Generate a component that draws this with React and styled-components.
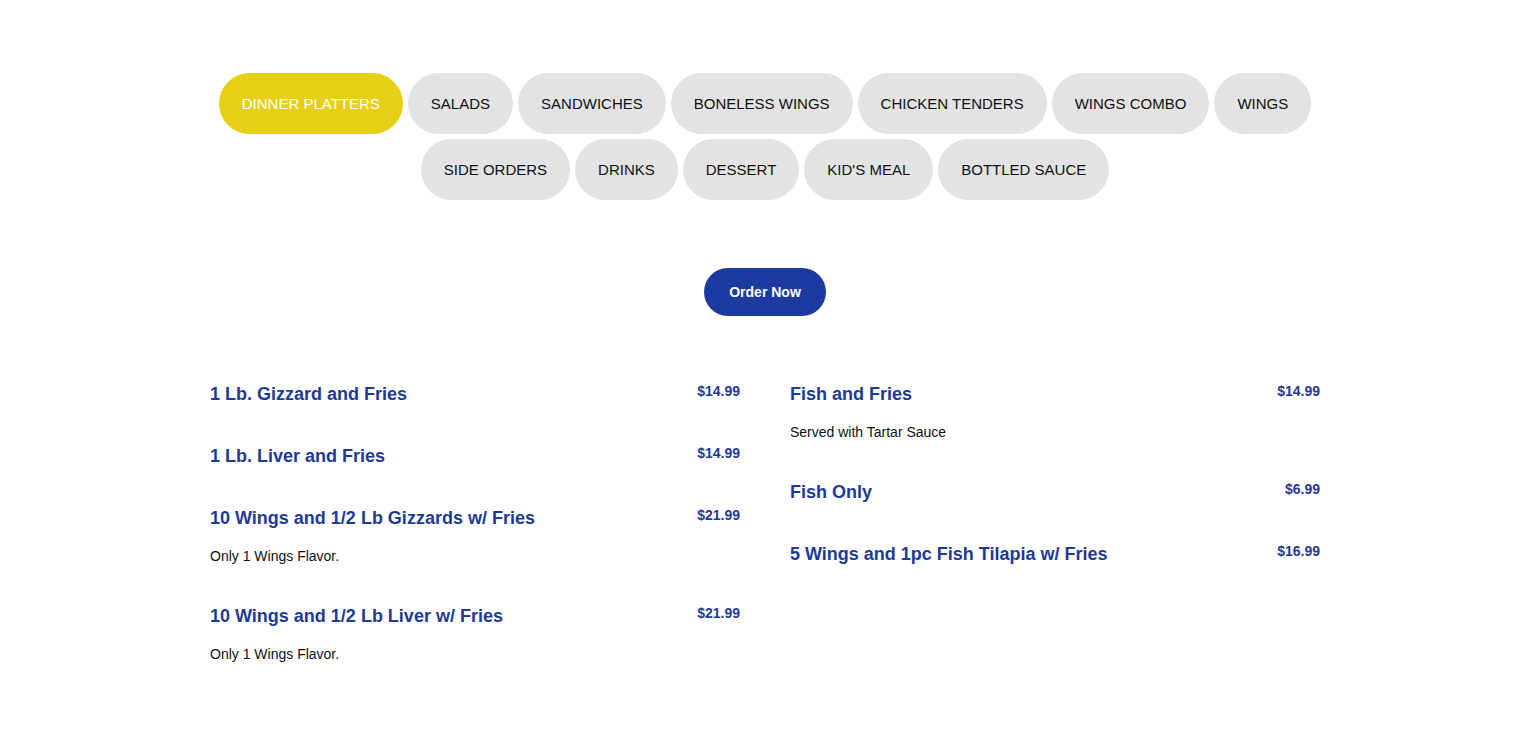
import React from "react";
import styled, { createGlobalStyle } from "styled-components";

const GlobalStyle = createGlobalStyle`
  html, body { margin: 0; padding: 0; background: #ffffff; }
  body { font-family: "Liberation Sans", Arial, sans-serif; }
  * { box-sizing: border-box; }
`;

const Page = styled.div`
  width: 1110px;
  margin: 0 auto;
  padding-top: 73px;
  display: flex;
  flex-direction: column;
  align-items: center;
`;

const Tabs = styled.nav`
  display: flex;
  flex-wrap: wrap;
  justify-content: center;
  gap: 5px;
  width: 100%;
`;

const Tab = styled.button`
  height: 61px;
  padding: 0 23px;
  border: none;
  border-radius: 31px;
  background: ${(p) => (p.$active ? "#e6cf14" : "#e3e3e3")};
  color: ${(p) => (p.$active ? "#ffffff" : "#111111")};
  font-family: "Liberation Sans", Arial, sans-serif;
  font-size: 15px;
  line-height: 17px;
  display: inline-flex;
  align-items: center;
  cursor: pointer;
`;

const OrderButton = styled.button`
  margin-top: 68px;
  height: 48px;
  padding: 0 25px;
  border: none;
  border-radius: 24px;
  background: #1c3aa0;
  color: #ffffff;
  font-family: "Liberation Sans", Arial, sans-serif;
  font-weight: 700;
  font-size: 14px;
  cursor: pointer;
`;

const MenuGrid = styled.div`
  margin-top: 67px;
  width: 100%;
  display: grid;
  grid-template-columns: 1fr 1fr;
  column-gap: 50px;
  align-items: start;
`;

const Column = styled.div`
  display: flex;
  flex-direction: column;
  gap: 40px;
`;

const Item = styled.div`
  display: flex;
  flex-direction: column;
`;

const ItemHead = styled.div`
  display: flex;
  justify-content: space-between;
  align-items: flex-start;
`;

const Title = styled.h3`
  margin: 0;
  font-size: 18px;
  line-height: 22px;
  font-weight: 700;
  color: #1e3a96;
`;

const Price = styled.span`
  font-size: 14px;
  line-height: 17px;
  font-weight: 700;
  color: #1e3a96;
`;

const Desc = styled.p`
  margin: 19px 0 0;
  font-size: 14px;
  line-height: 17px;
  color: #111111;
`;

const categories = [
  "DINNER PLATTERS",
  "SALADS",
  "SANDWICHES",
  "BONELESS WINGS",
  "CHICKEN TENDERS",
  "WINGS COMBO",
  "WINGS",
  "SIDE ORDERS",
  "DRINKS",
  "DESSERT",
  "KID'S MEAL",
  "BOTTLED SAUCE",
];

const left = [
  { title: "1 Lb. Gizzard and Fries", price: "$14.99" },
  { title: "1 Lb. Liver and Fries", price: "$14.99" },
  { title: "10 Wings and 1/2 Lb Gizzards w/ Fries", price: "$21.99", desc: "Only 1 Wings Flavor." },
  { title: "10 Wings and 1/2 Lb Liver w/ Fries", price: "$21.99", desc: "Only 1 Wings Flavor." },
];

const right = [
  { title: "Fish and Fries", price: "$14.99", desc: "Served with Tartar Sauce" },
  { title: "Fish Only", price: "$6.99" },
  { title: "5 Wings and 1pc Fish Tilapia w/ Fries", price: "$16.99" },
];

const MenuColumn = ({ items }) => (
  <Column>
    {items.map((it) => (
      <Item key={it.title}>
        <ItemHead>
          <Title>{it.title}</Title>
          <Price>{it.price}</Price>
        </ItemHead>
        {it.desc && <Desc>{it.desc}</Desc>}
      </Item>
    ))}
  </Column>
);

export default function App() {
  return (
    <>
      <GlobalStyle />
      <Page>
        <Tabs>
          {categories.map((c, i) => (
            <Tab key={c} $active={i === 0}>
              {c}
            </Tab>
          ))}
        </Tabs>
        <OrderButton>Order Now</OrderButton>
        <MenuGrid>
          <MenuColumn items={left} />
          <MenuColumn items={right} />
        </MenuGrid>
      </Page>
    </>
  );
}
